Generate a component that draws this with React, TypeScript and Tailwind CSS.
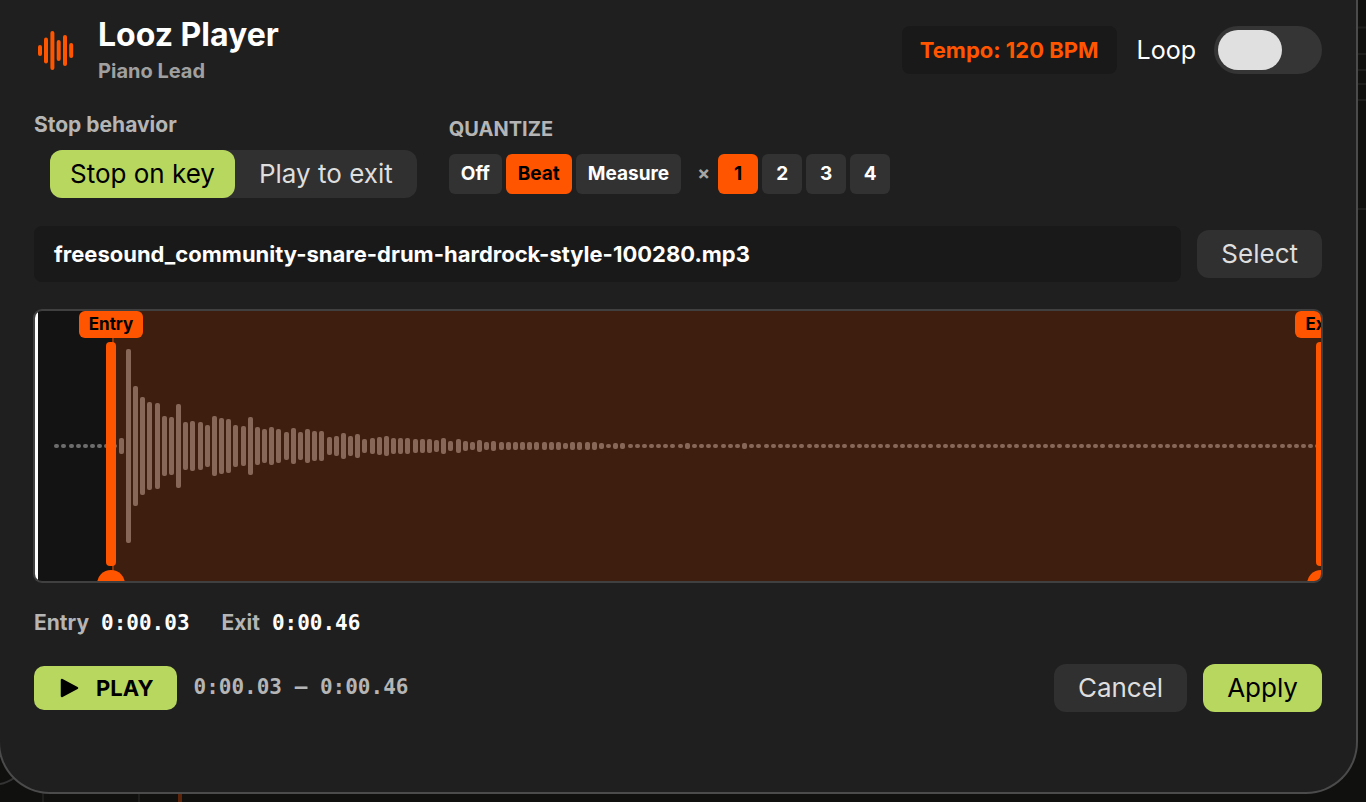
import React, { useState } from 'react';

type StopMode = 'key' | 'exit';

const QUANTIZE_MODES = ['Off', 'Beat', 'Measure'];
const MULTIPLIERS = [1, 2, 3, 4];

const BAR_COUNT = 177;
const BAR_PITCH = 7.165;

// Peak heights, everything after the tail is silence (4px dots)
const PEAKS = [
  4, 4, 4, 4, 4, 4, 4, 4, 4, 16, 194, 120, 98, 88, 86, 60, 58, 84, 48, 50,
  48, 42, 60, 56, 54, 42, 40, 58, 38, 34, 38, 34, 28, 36, 28, 34, 30, 30, 18, 20,
  26, 20, 24, 14, 16, 18, 20, 16, 16, 16, 14, 14, 14, 12, 16, 10, 14, 10, 8, 12,
  8, 10, 8, 8, 8, 8, 8, 8, 8, 8, 8, 6, 8, 8, 8, 8, 6, 4, 6, 6,
  4, 4, 4, 4, 4, 4, 4, 4, 6, 4, 4, 4, 4, 4, 4, 4, 6,
];

const LogoIcon = () => (
  <svg width="44" height="44" viewBox="0 0 44 44" fill="#ff5500" aria-hidden="true">
    <rect x="4" y="17" width="4" height="11" rx="2" />
    <rect x="10" y="9.5" width="4" height="26" rx="2" />
    <rect x="16.4" y="3" width="4" height="39" rx="2" />
    <rect x="22.7" y="12" width="4" height="21" rx="2" />
    <rect x="29" y="7" width="4" height="31" rx="2" />
    <rect x="35.2" y="15" width="4" height="15" rx="2" />
  </svg>
);

const Waveform = () => (
  <svg
    className="block h-full w-full"
    viewBox="0 0 1286 270"
    preserveAspectRatio="none"
    aria-hidden="true"
  >
    {Array.from({ length: BAR_COUNT }, (_, i) => {
      const h = PEAKS[i] ?? 4;
      return (
        <rect
          key={i}
          x={Math.round(19.3 + i * BAR_PITCH)}
          y={135 - h / 2}
          width="5"
          height={h}
          rx="2"
          fill="#fff"
          fillOpacity="0.38"
        />
      );
    })}
  </svg>
);

const Backdrop = () => (
  <svg className="absolute inset-0 h-full w-full" aria-hidden="true">
    <g stroke="#1e1e1c" strokeWidth="2">
      <path d="M0 784Q7 783 14 778" fill="none" stroke="#333" />
      <path d="M43 770V802M139 790V802" />
      <path d="M1340 27.5H1366M1340 54H1366M1340 70H1366M1340 84H1366M1340 100H1366M1340 209H1366" />
    </g>
    <rect x="178" y="790" width="4" height="12" fill="#5c2408" />
  </svg>
);

interface MarkerProps {
  label: string;
  className: string;
}

const Marker: React.FC<MarkerProps> = ({ label, className }) => (
  <div className={`absolute inset-y-0 flex w-20 -translate-x-1/2 flex-col items-center ${className}`}>
    <span className="rounded-md bg-[#ff5500] px-[10px] text-[17px] leading-[27px] font-bold text-black">
      {label}
    </span>
    <div className="mt-1 h-56 w-[10px] shrink-0 rounded bg-[#ff5500]" />
    <div className="mt-1 size-7 shrink-0 rounded-full bg-[#ff5500]" />
  </div>
);

export default function App() {
  const [loop, setLoop] = useState(false);
  const [stopMode, setStopMode] = useState<StopMode>('key');
  const [quantize, setQuantize] = useState('Beat');
  const [multiplier, setMultiplier] = useState(1);

  const segment = (active: boolean) =>
    active ? 'bg-[#b7d75f] text-black' : 'text-[#dedede]';
  const chip = (active: boolean) =>
    active ? 'bg-[#ff5500] text-black' : 'bg-[#323232] text-white';

  return (
    <div className="relative min-h-screen overflow-hidden bg-[#10100f] font-[Inter,sans-serif]">
      <Backdrop />
      <main className="relative mr-2 -ml-0.5 flex flex-col gap-7 rounded-b-[52px] border-2 border-t-0 border-[#4b4b4b] bg-[#1f1f1f] pt-[15px] pr-[34px] pb-20 pl-[34px]">
        <header className="flex items-center justify-between">
          <div className="flex items-center gap-5">
            <LogoIcon />
            <div className="flex flex-col gap-0.5">
              <h1 className="text-[32px] leading-10 font-bold text-white">Looz Player</h1>
              <p className="text-xl leading-7 font-bold text-[#a0a0a0]">Piano Lead</p>
            </div>
          </div>
          <div className="flex items-center gap-5">
            <span className="rounded-lg bg-[#191919] px-[18px] text-[22px] leading-[48px] font-bold text-[#ff5500]">
              Tempo: 120 BPM
            </span>
            <label className="flex cursor-pointer items-center gap-[18px] text-[25px] leading-8 text-white">
              Loop
              <input
                type="checkbox"
                role="switch"
                checked={loop}
                onChange={e => setLoop(e.target.checked)}
                className="h-12 w-[108px] cursor-pointer appearance-none rounded-full bg-[#353535] p-1 before:block before:h-10 before:w-16 before:rounded-full before:bg-[#e0e0e0] checked:bg-[#b7d75f] checked:before:ml-auto"
              />
            </label>
          </div>
        </header>

        <section className="flex items-center gap-8">
          <div className="flex flex-col gap-[13px]">
            <h2 className="text-[21px] leading-6 font-bold text-[#b5b5b5]">Stop behavior</h2>
            <div className="ml-4 flex rounded-xl bg-[#303030] text-[26px] leading-[48px]">
              <button
                onClick={() => setStopMode('key')}
                className={`rounded-xl px-5 ${segment(stopMode === 'key')}`}
              >
                Stop on key
              </button>
              <button
                onClick={() => setStopMode('exit')}
                className={`rounded-xl px-6 ${segment(stopMode === 'exit')}`}
              >
                Play to exit
              </button>
            </div>
          </div>

          <div className="flex flex-col gap-[13px]">
            <h2 className="text-xl leading-6 font-bold text-[#b5b5b5]">QUANTIZE</h2>
            <div className="flex items-center gap-1 text-[19px] leading-10 font-bold">
              {QUANTIZE_MODES.map(mode => (
                <button
                  key={mode}
                  onClick={() => setQuantize(mode)}
                  className={`rounded-md px-3 ${chip(quantize === mode)}`}
                >
                  {mode}
                </button>
              ))}
              <span className="ml-3 w-[17px] text-[#a5a5a5]">×</span>
              {MULTIPLIERS.map(n => (
                <button
                  key={n}
                  onClick={() => setMultiplier(n)}
                  className={`w-10 rounded-md ${chip(multiplier === n)}`}
                >
                  {n}
                </button>
              ))}
            </div>
          </div>
        </section>

        <section className="flex items-center gap-4">
          <div className="min-w-0 flex-1 truncate rounded-lg bg-[#191919] px-5 text-[22px] leading-[56px] font-bold text-white">
            freesound_community-snare-drum-hardrock-style-100280.mp3
          </div>
          <button className="rounded-xl bg-[#303030] px-6 text-[26px] leading-[48px] text-[#dedede]">
            Select
          </button>
        </section>

        <section className="relative h-[272px] overflow-hidden rounded-lg border border-[#404040] bg-[#131313] ring-1 ring-[#404040]">
          <Waveform />
          {/* Active region between the two markers */}
          <div className="absolute inset-y-0 right-0 left-[6%] border-l-2 border-[#ff5500]/40 bg-[#ff5500]/18" />
          <div className="absolute inset-y-0 left-0 w-[3px] bg-white" />
          <Marker label="Entry" className="left-[76px]" />
          <Marker label="Exit" className="left-full" />
        </section>

        <dl className="flex gap-8 text-[21px] leading-[26px] font-bold">
          <div className="flex gap-3">
            <dt className="text-[#b5b5b5]">Entry</dt>
            <dd className="font-['DejaVu_Sans_Mono',monospace] text-white">0:00.03</dd>
          </div>
          <div className="flex gap-3">
            <dt className="text-[#b5b5b5]">Exit</dt>
            <dd className="font-['DejaVu_Sans_Mono',monospace] text-white">0:00.46</dd>
          </div>
        </dl>

        <footer className="flex items-center gap-4">
          <button className="flex items-center gap-4 rounded-[10px] bg-[#b7d75f] pr-6 pl-[26px] text-[22px] leading-[44px] font-bold text-black">
            <svg width="20" height="22" viewBox="0 0 20 22" aria-hidden="true">
              <path d="M2 3L17 11L2 19Z" fill="#000" stroke="#000" strokeWidth="2.5" strokeLinejoin="round" />
            </svg>
            PLAY
          </button>
          <span className="font-['DejaVu_Sans_Mono',monospace] text-[21px] font-bold text-[#b5b5b5]">
            0:00.03 – 0:00.46
          </span>
          <button className="ml-auto rounded-xl bg-[#303030] px-6 text-[26px] leading-[48px] text-[#dedede]">
            Cancel
          </button>
          <button className="rounded-xl bg-[#b7d75f] px-6 text-[26px] leading-[48px] text-black">
            Apply
          </button>
        </footer>
      </main>
    </div>
  );
}
